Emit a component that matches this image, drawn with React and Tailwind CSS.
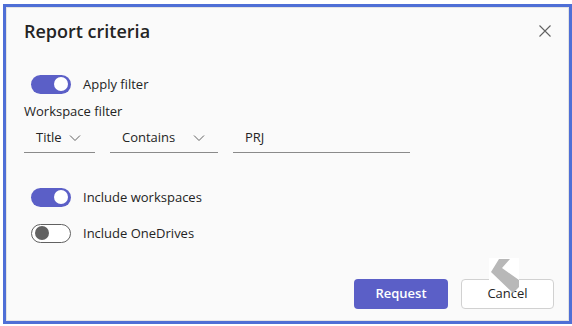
import React from "react";

function Toggle({ on }) {
  return on ? (
    <div className="w-[40px] h-[19px] rounded-full bg-[#5b5fc7] flex items-center justify-end pr-[3px] shrink-0">
      <div className="w-[14px] h-[14px] rounded-full bg-white" />
    </div>
  ) : (
    <div className="w-[40px] h-[19px] rounded-full border border-[#616161] bg-white flex items-center pl-[3px] shrink-0">
      <div className="w-[14px] h-[14px] rounded-full bg-[#616161]" />
    </div>
  );
}

function Chevron() {
  return (
    <svg width="12" height="8" viewBox="0 0 12 8" className="shrink-0">
      <path d="M1 1.5 L6 6.5 L11 1.5" fill="none" stroke="#616161" strokeWidth="1" />
    </svg>
  );
}

export default function App() {
  const font = { fontFamily: '"Open Sans", "Noto Sans", sans-serif' };
  return (
    <div className="w-[572px] h-[326px] bg-white pt-[4px] pl-[3px]" style={font}>
      <div className="relative w-[569px] h-[320px] border-[3px] border-[#4f6fd6] bg-[#fafafa] text-[#242424]">
        <div className="h-full border border-[#e3e3e3] pl-[17px] pr-[14px] pt-[9px] flex flex-col">
          <div className="flex items-center justify-between h-[28px]">
            <div className="text-[18px] font-semibold leading-[28px]">Report criteria</div>
            <svg width="14" height="14" viewBox="0 0 14 14" className="mr-[2px]">
              <path d="M1.5 1.5 L12.5 12.5 M12.5 1.5 L1.5 12.5" stroke="#616161" strokeWidth="1.1" />
            </svg>
          </div>

          <div className="flex items-center mt-[29px] pl-[7px] gap-[12px]">
            <Toggle on />
            <span className="text-[13px] leading-[20px]">Apply filter</span>
          </div>

          <div className="text-[13px] leading-[20px] mt-[7px]">Workspace filter</div>

          <div className="flex gap-[15px] mt-[2px]">
            <div className="w-[71px] h-[30px] border-b border-[#8a8a8a] flex items-center pl-[12px] pr-[14px] justify-between">
              <span className="text-[13px]">Title</span>
              <Chevron />
            </div>
            <div className="w-[108px] h-[30px] border-b border-[#8a8a8a] flex items-center pl-[12px] pr-[13px] justify-between">
              <span className="text-[13px]">Contains</span>
              <Chevron />
            </div>
            <div className="w-[177px] h-[30px] border-b border-[#8a8a8a] flex items-center pl-[12px]">
              <span className="text-[13px]">PRJ</span>
            </div>
          </div>

          <div className="flex items-center mt-[34px] pl-[7px] gap-[12px]">
            <Toggle on />
            <span className="text-[13px] leading-[20px]">Include workspaces</span>
          </div>
          <div className="flex items-center mt-[16px] pl-[7px] gap-[12px]">
            <Toggle on={false} />
            <span className="text-[13px] leading-[20px]">Include OneDrives</span>
          </div>

          <div className="flex justify-end gap-[13px] mt-auto mb-[11px]">
            <button className="w-[94px] h-[30px] rounded-[4px] bg-[#5b5fc7] text-white text-[13px] font-semibold">
              Request
            </button>
            <button className="w-[93px] h-[30px] rounded-[4px] bg-white border border-[#d1d1d1] text-[13px]">
              Cancel
            </button>
          </div>
        </div>

        <svg className="absolute left-[483px] top-[251px]" width="30" height="36" viewBox="489 258 30 36">
          <rect x="489" y="258" width="30" height="31" fill="#ffffff" />
          <polygon points="499,259 510,259 502,268 519,280 519,287 513,293 491,272" fill="#b8b8b8" />
        </svg>
      </div>
    </div>
  );
}
